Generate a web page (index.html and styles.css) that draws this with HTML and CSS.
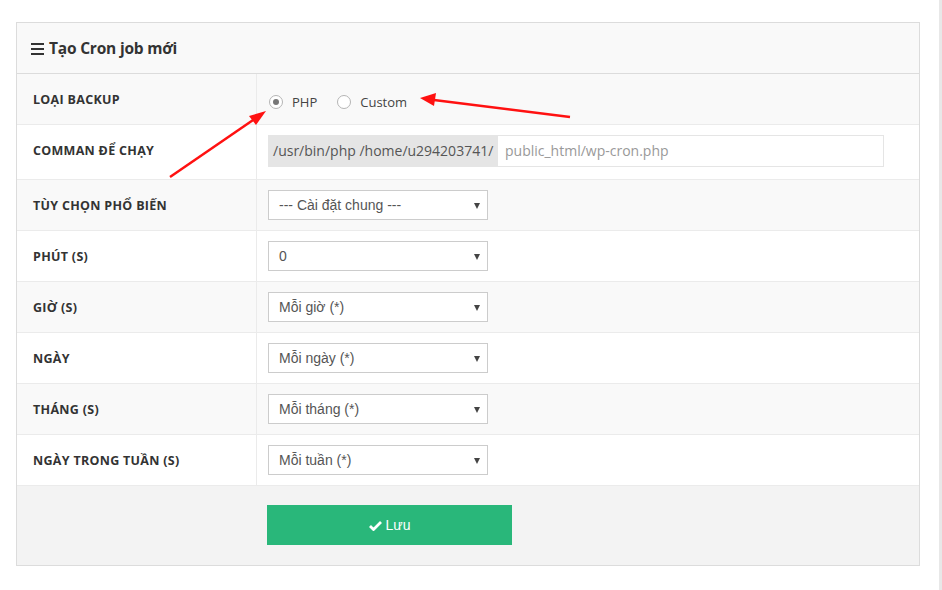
FILE: index.html
```html
<!DOCTYPE html>
<html lang="vi">
<head>
<meta charset="utf-8">
<title>Tạo Cron job mới</title>
<link rel="stylesheet" href="styles.css">
</head>
<body>
<div class="page">
  <div class="panel">
    <div class="panel-head">
      <span class="menu-icon"><i></i><i></i><i></i></span>
      <h3>Tạo Cron job mới</h3>
    </div>
    <div class="row alt">
      <div class="label">Loại backup</div>
      <div class="value radios">
        <label class="radio"><span class="circle checked"></span>PHP</label>
        <label class="radio"><span class="circle"></span>Custom</label>
      </div>
    </div>
    <div class="row tall">
      <div class="label">Comman để chạy</div>
      <div class="value">
        <div class="input-group">
          <span class="addon">/usr/bin/php /home/u294203741/</span>
          <span class="input">public_html/wp-cron.php</span>
        </div>
      </div>
    </div>
    <div class="row alt">
      <div class="label">Tùy chọn phổ biến</div>
      <div class="value"><div class="select">--- Cài đặt chung ---</div></div>
    </div>
    <div class="row">
      <div class="label">Phút (s)</div>
      <div class="value"><div class="select">0</div></div>
    </div>
    <div class="row alt">
      <div class="label">Giờ (s)</div>
      <div class="value"><div class="select">Mỗi giờ (*)</div></div>
    </div>
    <div class="row">
      <div class="label">Ngày</div>
      <div class="value"><div class="select">Mỗi ngày (*)</div></div>
    </div>
    <div class="row alt">
      <div class="label">Tháng (s)</div>
      <div class="value"><div class="select">Mỗi tháng (*)</div></div>
    </div>
    <div class="row">
      <div class="label">Ngày trong tuần (s)</div>
      <div class="value"><div class="select">Mỗi tuần (*)</div></div>
    </div>
    <div class="panel-foot">
      <button class="btn-save">
        <svg width="13" height="11" viewBox="0 0 13 11"><path d="M1 6 L4.5 9.5 L12 2" fill="none" stroke="#fff" stroke-width="2.8"/></svg>
        Lưu
      </button>
    </div>
  </div>
  <svg class="arrows" width="942" height="590" viewBox="0 0 942 590">
    <line x1="170" y1="177" x2="256" y2="118" stroke="#f11" stroke-width="2.5"/>
    <polygon points="266,111 249,116 256,125" fill="#f11"/>
    <line x1="570" y1="117" x2="434" y2="100" stroke="#f11" stroke-width="2.5"/>
    <polygon points="420,98 436,93 434,106" fill="#f11"/>
  </svg>
  <div class="edge"></div>
</div>
</body>
</html>
```

FILE: styles.css
```css
html, body {
  margin: 0;
  padding: 0;
  background: #fff;
}
.page {
  position: relative;
  width: 942px;
  height: 590px;
  padding-top: 22px;
  box-sizing: border-box;
  font-family: "Open Sans", "Liberation Sans", sans-serif;
  color: #333;
}
.panel {
  margin-left: 16px;
  width: 904px;
  border: 1px solid #dcdcdc;
  box-sizing: border-box;
}
.panel-head {
  height: 50px;
  background: #f9f9f9;
  border-bottom: 1px solid #dcdcdc;
  display: flex;
  align-items: center;
  padding-left: 14px;
  gap: 5px;
}
.menu-icon {
  display: flex;
  flex-direction: column;
  gap: 3px;
  width: 13px;
  margin-top: 1px;
}
.menu-icon i {
  display: block;
  height: 2px;
  background: #333;
}
.panel-head h3 {
  margin: 0;
  font-size: 15.5px;
  font-weight: 700;
  color: #333;
  letter-spacing: -0.2px;
}
.row {
  display: grid;
  grid-template-columns: 240px 1fr;
  height: 51px;
  border-bottom: 1px solid #ebebeb;
  box-sizing: border-box;
  background: #fff;
}
.row.alt {
  background: #f9f9f9;
}
.row.tall {
  height: 55px;
}
.row.tall .label {
  padding-bottom: 4px;
}
.label {
  border-right: 1px solid #ebebeb;
  padding-left: 16px;
  display: flex;
  align-items: center;
  font-size: 12.5px;
  font-weight: 700;
  text-transform: uppercase;
  color: #333;
  letter-spacing: 0.3px;
}
.value {
  padding-left: 11px;
  display: flex;
  align-items: center;
}
.radios {
  padding-top: 6px;
  padding-left: 12px;
  gap: 20px;
  font-size: 13px;
  color: #444;
}
.radio {
  display: flex;
  align-items: center;
  gap: 9px;
}
.circle {
  width: 12px;
  height: 12px;
  border: 1px solid #b5b5b5;
  border-radius: 50%;
  background: #fff;
  display: flex;
  align-items: center;
  justify-content: center;
}
.circle.checked::after {
  content: "";
  width: 6px;
  height: 6px;
  border-radius: 50%;
  background: #777;
}
.input-group {
  display: flex;
  height: 32px;
  margin-bottom: 3px;
}
.addon {
  background: #e5e5e5;
  width: 230px;
  box-sizing: border-box;
  padding-left: 5px;
  display: flex;
  align-items: center;
  font-size: 14px;
  color: #555;
}
.input {
  width: 386px;
  box-sizing: border-box;
  border: 1px solid #e5e5e5;
  border-left: none;
  padding-left: 7px;
  display: flex;
  align-items: center;
  font-size: 14px;
  color: #999;
  background: #fff;
}
.select {
  position: relative;
  width: 220px;
  height: 30px;
  box-sizing: border-box;
  border: 1px solid #ccc;
  background: #fff;
  padding-left: 10px;
  display: flex;
  align-items: center;
  font-family: "Liberation Sans", Arial, sans-serif;
  font-size: 14px;
  color: #555;
}
.select::after {
  content: "";
  position: absolute;
  right: 7px;
  top: 12px;
  border-left: 3.5px solid transparent;
  border-right: 3.5px solid transparent;
  border-top: 6px solid #444;
}
.panel-foot {
  height: 79px;
  background: #f3f3f3;
  padding: 19px 0 0 250px;
  box-sizing: border-box;
}
.btn-save {
  width: 245px;
  height: 40px;
  border: none;
  background: #29b77a;
  color: #fff;
  font-family: "Liberation Sans", Arial, sans-serif;
  font-size: 14px;
  display: flex;
  align-items: center;
  justify-content: center;
  gap: 4px;
  padding: 0;
}
.arrows {
  position: absolute;
  left: 0;
  top: 0;
  pointer-events: none;
}
.edge {
  position: absolute;
  right: 0;
  top: 0;
  width: 3px;
  height: 590px;
  background: #e8e8e8;
}
```
